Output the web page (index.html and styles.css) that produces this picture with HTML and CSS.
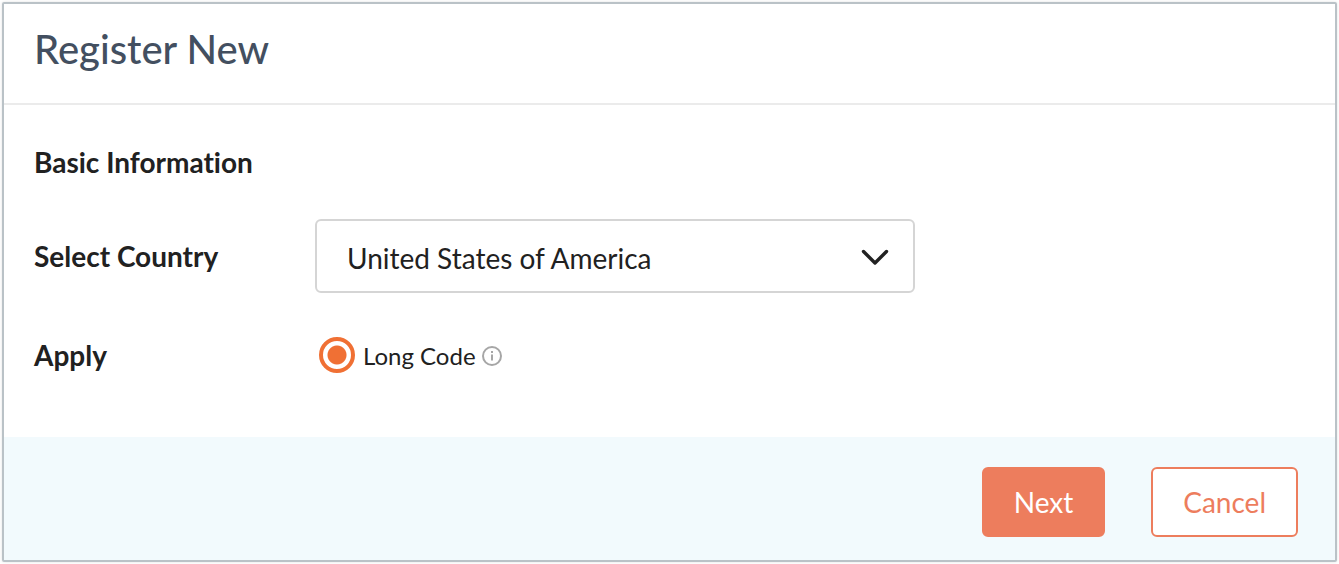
FILE: index.html
```
<!DOCTYPE html>
<html lang="en">
<head>
    <meta charset="UTF-8">
    <meta name="viewport" content="width=device-width, initial-scale=1.0">
    <title>Register New</title>
    <link rel="stylesheet" href="styles.css">
</head>
<body>
    <form class="register-panel">
        <header class="panel-header">
            <h1>Register New</h1>
        </header>

        <div class="panel-body">
            <h2>Basic Information</h2>

            <div class="form-row">
                <label class="row-label" for="country">Select Country</label>
                <select id="country">
                    <option value="US">United States of America</option>
                </select>
            </div>

            <div class="form-row apply-row" role="radiogroup" aria-labelledby="applyLabel">
                <span class="row-label" id="applyLabel">Apply</span>
                <div class="radio-group">
                    <input type="radio" id="longCode" name="apply" checked>
                    <label for="longCode">Long Code</label>
                    <svg class="info-icon" viewBox="0 0 20 22" fill="none" stroke="#a6a6a6" stroke-width="2">
                        <circle cx="10" cy="12" r="9"/>
                        <path d="M10 10.5v6M10 7v2"/>
                    </svg>
                </div>
            </div>
        </div>

        <footer class="panel-footer">
            <button type="submit" class="btn btn-primary">Next</button>
            <button type="button" class="btn btn-outline">Cancel</button>
        </footer>
    </form>
</body>
</html>
```
FILE: styles.css
```
:root {
    --accent-color: #ed7d5d;
    --radio-color: #f07034;
    --border-color: #bac2c7;
    --text-primary: #212121;
    --title-color: #434f60;
}

* {
    margin: 0;
    padding: 0;
    box-sizing: border-box;
    font-family: Lato, 'Liberation Sans', sans-serif;
    font-variant-ligatures: none;
}

body {
    background: #fff;
    color: var(--text-primary);
    min-height: 100vh;
    display: flex;
    padding: 2px;
}

.register-panel {
    flex: 1;
    display: flex;
    flex-direction: column;
    border: 2px solid var(--border-color);
    border-radius: 2px;
    box-shadow: 0 0 3px rgba(0, 0, 0, 0.12);
}

.panel-header {
    padding: 19px 30px 28px;
    border-bottom: 2px solid #ebebeb;
}

.panel-header h1 {
    color: var(--title-color);
    font-size: 40px;
    font-weight: 500;
    line-height: 52px;
}

.panel-body {
    flex: 1;
    padding: 39px 30px;
}

.panel-body h2 {
    font-size: 28px;
    font-weight: 700;
    line-height: 36px;
    margin-bottom: 39px;
}

.form-row {
    display: flex;
    align-items: center;
}

.row-label {
    width: 281px;
    font-size: 28px;
    font-weight: 700;
    line-height: 36px;
}

.form-row select {
    width: 600px;
    height: 74px;
    padding: 4px 30px 0;
    border: 2px solid #d5d5d5;
    border-radius: 6px;
    appearance: none;
    background: url("data:image/svg+xml;charset=UTF-8,%3csvg xmlns='http://www.w3.org/2000/svg' viewBox='0 0 28 20' fill='none' stroke='%23212121' stroke-width='3.4' stroke-linecap='round' stroke-linejoin='round'%3e%3cpath d='M2.5 5.5l11.5 11.5 11.5-11.5'/%3e%3c/svg%3e") no-repeat right 24px center / 28px 20px #fff;
    color: var(--text-primary);
    font-size: 28px;
}

.apply-row {
    margin-top: 44px;
}

.radio-group {
    display: flex;
    align-items: center;
    gap: 8px;
    padding-left: 4px;
}

.radio-group input {
    width: 36px;
    height: 36px;
    appearance: none;
    border: 4px solid var(--radio-color);
    border-radius: 50%;
}

.radio-group input:checked {
    background: radial-gradient(circle, var(--radio-color) 9px, #fff 10px);
}

.radio-group label {
    font-size: 24px;
}

.info-icon {
    width: 20px;
    height: 22px;
    margin-left: -2px;
}

.panel-footer {
    display: flex;
    justify-content: flex-end;
    gap: 46px;
    padding: 30px 37px 23px;
    background: #f2fafd;
}

.btn {
    height: 70px;
    padding: 0 30px;
    border: 2px solid var(--accent-color);
    border-radius: 6px;
    font-size: 28px;
    cursor: pointer;
}

.btn-primary {
    background: var(--accent-color);
    color: #fff;
}

.btn-outline {
    background: #fff;
    color: var(--accent-color);
}
```
